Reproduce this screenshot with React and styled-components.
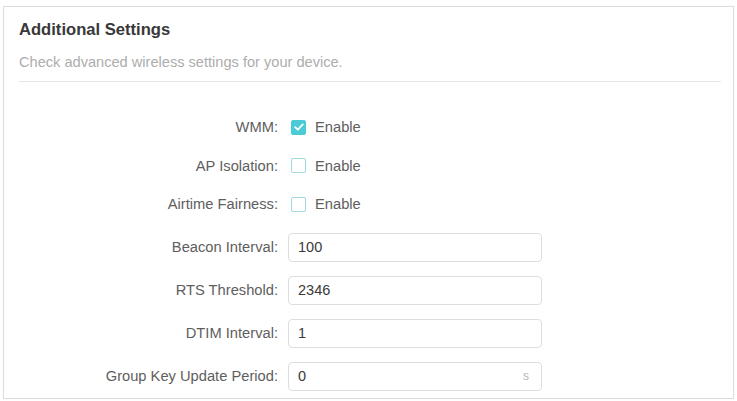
import React from "react";
import styled, { createGlobalStyle } from "styled-components";

const Global = createGlobalStyle`
  html, body { margin: 0; padding: 0; background: #ffffff; }
  body { font-family: "Liberation Sans", Arial, sans-serif; }
  * { box-sizing: border-box; }
`;

const Page = styled.div`
  width: 737px;
  height: 401px;
  padding: 6px 3px 2px 3px;
  background: #ffffff;
`;

const Card = styled.section`
  height: 393px;
  border: 1px solid #dcdcdc;
  box-shadow: 0 0 1px rgba(0, 0, 0, 0.06);
  padding: 13px 13px 0 15px;
  background: #fff;
`;

const Title = styled.h2`
  margin: 0;
  font-size: 16.6px;
  line-height: 20px;
  font-weight: 700;
  color: #383838;
`;

const Subtitle = styled.p`
  margin: 12.7px 0 0 0;
  font-size: 14.6px;
  line-height: 18px;
  color: #adadad;
`;

const Divider = styled.hr`
  margin: 10px 0 0 0;
  border: none;
  height: 1.5px;
  background: #e6e6e6;
  width: 702px;
`;

const Form = styled.div`
  display: flex;
  flex-direction: column;
  padding-top: 26px;
  margin-left: -15px;
`;

const Row = styled.div`
  display: grid;
  grid-template-columns: 274px 1fr;
  column-gap: 10px;
  align-items: center;
  height: ${(p) => (p.$input ? "43px" : "38.5px")};
  margin-top: ${(p) => (p.$first ? "2px" : "0")};
`;

const Label = styled.label`
  text-align: right;
  font-size: 14.7px;
  color: #5e5e5e;
  white-space: nowrap;
`;

const CheckWrap = styled.div`
  display: flex;
  align-items: center;
  gap: 9px;
  padding-left: 3px;
  font-size: 14.7px;
  color: #5e5e5e;
`;

const Box = styled.span`
  width: 15px;
  height: 15px;
  border-radius: 2px;
  display: inline-flex;
  align-items: center;
  justify-content: center;
  background: ${(p) => (p.$checked ? "#4acbd6" : "#ffffff")};
  border: 1.5px solid ${(p) => (p.$checked ? "#4acbd6" : "#a2d8df")};
`;

const InputBox = styled.div`
  width: 254px;
  height: 29px;
  border: 1px solid #dedede;
  border-radius: 4px;
  display: flex;
  align-items: center;
  padding: 0 9px;
  font-size: 14.5px;
  color: #3a3a3a;
  background: #fff;
`;

const Value = styled.span`
  flex: 1;
`;

const Unit = styled.span`
  font-size: 12px;
  color: #b5b5b5;
  margin-right: 3px;
`;

const Check = ({ checked }) => (
  <Box $checked={checked}>
    {checked && (
      <svg width="10" height="8" viewBox="0 0 10 8">
        <path d="M1.2 4.2 L3.8 6.6 L8.8 1.4" fill="none" stroke="#fff" strokeWidth="1.8" strokeLinecap="round" strokeLinejoin="round" />
      </svg>
    )}
  </Box>
);

const checks = [
  { label: "WMM:", checked: true },
  { label: "AP Isolation:", checked: false },
  { label: "Airtime Fairness:", checked: false },
];

const inputs = [
  { label: "Beacon Interval:", value: "100" },
  { label: "RTS Threshold:", value: "2346" },
  { label: "DTIM Interval:", value: "1" },
  { label: "Group Key Update Period:", value: "0", unit: "s" },
];

export default function App() {
  return (
    <>
      <Global />
      <Page>
        <Card>
          <Title>Additional Settings</Title>
          <Subtitle>Check advanced wireless settings for your device.</Subtitle>
          <Divider />
          <Form>
            {checks.map((c) => (
              <Row key={c.label}>
                <Label>{c.label}</Label>
                <CheckWrap>
                  <Check checked={c.checked} />
                  Enable
                </CheckWrap>
              </Row>
            ))}
            {inputs.map((f, i) => (
              <Row key={f.label} $input $first={i === 0}>
                <Label>{f.label}</Label>
                <InputBox>
                  <Value>{f.value}</Value>
                  {f.unit && <Unit>{f.unit}</Unit>}
                </InputBox>
              </Row>
            ))}
          </Form>
        </Card>
      </Page>
    </>
  );
}
